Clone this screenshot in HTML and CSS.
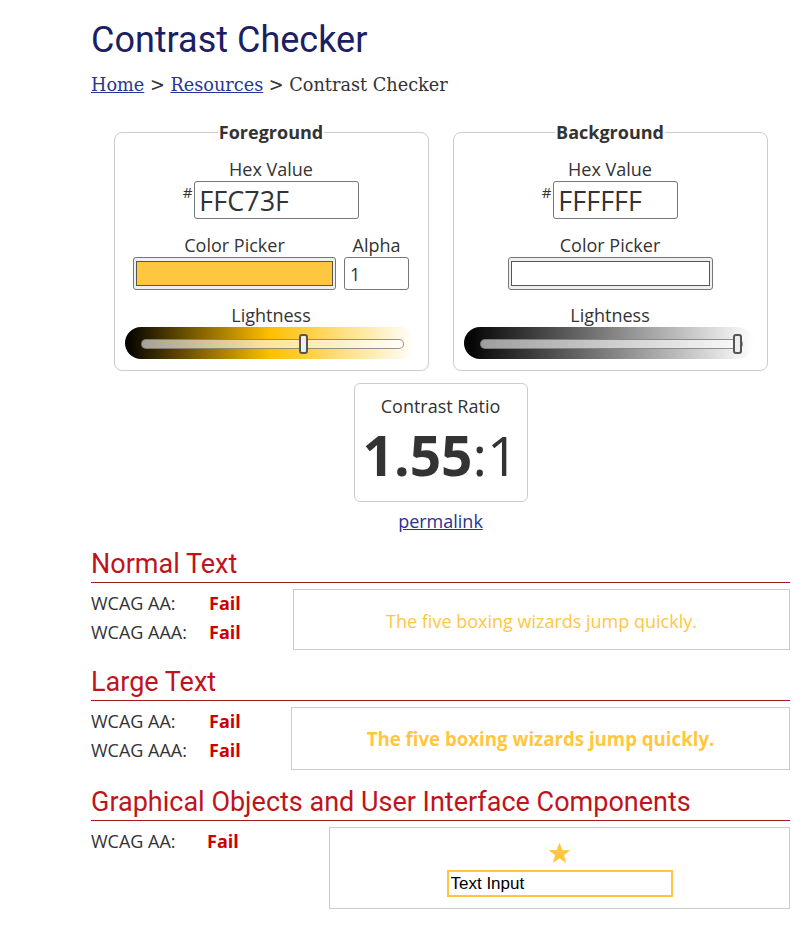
FILE: index.html
```html
<!DOCTYPE html>
<html lang="en">
<head>
<meta charset="utf-8">
<title>Contrast Checker</title>
<link rel="stylesheet" href="styles.css">
</head>
<body>
<main class="page">
  <h1 class="title">Contrast Checker</h1>
  <nav class="crumbs"><a href="#">Home</a> &gt; <a href="#">Resources</a> &gt; Contrast Checker</nav>

  <div class="pickers">
    <fieldset class="panel">
      <legend>Foreground</legend>
      <div class="panel-body">
        <div class="lbl">Hex Value</div>
        <div class="hexrow"><span class="hash">#</span><input class="hex" type="text" value="FFC73F"></div>
        <div class="pickrow">
          <div class="col">
            <div class="lbl">Color Picker</div>
            <div class="swatch"><span class="swatch-fill swatch-fg"></span></div>
          </div>
          <div class="col">
            <div class="lbl">Alpha</div>
            <input class="alpha" type="text" value="1">
          </div>
        </div>
        <div class="lbl lbl-light">Lightness</div>
        <div class="slider slider-fg">
          <div class="track"><span class="thumb" style="left:calc(62.4% - 5.6px)"></span></div>
        </div>
      </div>
    </fieldset>

    <fieldset class="panel">
      <legend>Background</legend>
      <div class="panel-body">
        <div class="lbl">Hex Value</div>
        <div class="hexrow"><span class="hash">#</span><input class="hex hex-short" type="text" value="FFFFFF"></div>
        <div class="pickrow">
          <div class="col">
            <div class="lbl">Color Picker</div>
            <div class="swatch swatch-wide"><span class="swatch-fill swatch-bg"></span></div>
          </div>
        </div>
        <div class="lbl lbl-light">Lightness</div>
        <div class="slider slider-bg">
          <div class="track"><span class="thumb" style="left:calc(100% - 9px)"></span></div>
        </div>
      </div>
    </fieldset>
  </div>

  <div class="ratio-box">
    <div class="lbl">Contrast Ratio</div>
    <div class="ratio"><b>1.55</b>:1</div>
  </div>
  <div class="perma"><a href="#">permalink</a></div>

  <h2 class="sec-title sec-first">Normal Text</h2>
  <div class="result result-normal">
    <span class="k">WCAG AA:</span><span class="fail">Fail</span>
    <div class="sample sample-normal">The five boxing wizards jump quickly.</div>
    <span class="k">WCAG AAA:</span><span class="fail">Fail</span>
  </div>

  <h2 class="sec-title">Large Text</h2>
  <div class="result result-large">
    <span class="k">WCAG AA:</span><span class="fail">Fail</span>
    <div class="sample sample-large">The five boxing wizards jump quickly.</div>
    <span class="k">WCAG AAA:</span><span class="fail">Fail</span>
  </div>

  <h2 class="sec-title">Graphical Objects and User Interface Components</h2>
  <div class="result result-ui">
    <span class="k">WCAG AA:</span><span class="fail">Fail</span>
    <div class="sample sample-ui">
      <svg class="star" width="23" height="22" viewBox="0 0 24 23" aria-hidden="true"><polygon points="12,0.5 14.9,8.3 23.3,8.6 16.7,13.8 19,21.9 12,17.2 5,21.9 7.3,13.8 0.7,8.6 9.1,8.3" fill="#FFC73F"/></svg>
      <input class="ui-input" type="text" value="Text Input">
    </div>
  </div>
</main>
</body>
</html>
```

FILE: styles.css
```css
* { box-sizing: border-box; }

body {
  margin: 0;
  background: #fff;
  color: #333;
  font-family: "Open Sans", "DejaVu Sans", sans-serif;
  font-size: 18px;
}

.page {
  padding: 19px 18px 0 91px;
}

.title {
  margin: 0;
  font: 400 36px/42px Roboto, "Liberation Sans", sans-serif;
  color: #1a2061;
}

.crumbs {
  margin-top: 12px;
  font: 400 17.7px/24px "DejaVu Serif", "Liberation Serif", serif;
  color: #333;
}
.crumbs a { color: #283593; }

.pickers {
  margin-top: 23px;
  display: flex;
  justify-content: center;
  gap: 24px;
}

.panel {
  margin: 0;
  width: 315px;
  min-width: 0;
  padding: 13px 10px 11px;
  border: 1px solid #ccc;
  border-radius: 8px;
}
.panel legend {
  margin: 0 auto;
  padding: 0 1px;
  font-weight: 700;
  font-size: 18px;
  line-height: 24px;
  color: #333;
}

.panel-body {
  display: flex;
  flex-direction: column;
  align-items: center;
}

.lbl {
  font-size: 18px;
  line-height: 24px;
  text-align: center;
  color: #333;
}
.lbl-light { margin-top: 13px; }

.hexrow {
  display: flex;
  align-items: flex-start;
  margin-bottom: 14px;
}
.hash {
  font-size: 15px;
  line-height: 15px;
  margin-top: 4px;
  margin-right: 2px;
}
.hex {
  width: 165px;
  height: 38px;
  border: 1px solid #767676;
  border-radius: 3px;
  padding: 0 4px;
  font: 400 27px "Open Sans", sans-serif;
  color: #333;
  background: #fff;
}
.hex-short { width: 125px; }

.pickrow {
  display: flex;
  gap: 8px;
  justify-content: center;
}
.col {
  display: flex;
  flex-direction: column;
  align-items: center;
}

.swatch {
  width: 203px;
  height: 33px;
  padding: 3px 2px;
  border: 1px solid #767676;
  border-radius: 3px;
  background: #efefef;
}
.swatch-wide { width: 205px; }
.swatch-fill {
  display: block;
  height: 100%;
  border: 1px solid #555;
}
.swatch-fg { background: #FFC73F; }
.swatch-bg { background: #fff; }

.alpha {
  width: 65px;
  height: 33px;
  border: 1px solid #767676;
  border-radius: 3px;
  padding: 0 5px;
  font: 400 18px "Open Sans", sans-serif;
  color: #333;
  background: #fff;
}

.slider {
  width: 290px;
  height: 32px;
  border-radius: 16px;
  padding: 12px 11px 0 16px;
  margin-left: -2px;
}
.slider-fg { background: linear-gradient(to right, #000 0%, #ffbf00 50%, #fff 100%); }
.slider-bg { background: linear-gradient(to right, #000 0%, #808080 50%, #fff 100%); }

.track {
  position: relative;
  height: 10px;
  border-radius: 5px;
  border: 1px solid rgba(110, 110, 110, 0.75);
  background: rgba(255, 255, 255, 0.6);
}
.thumb {
  position: absolute;
  top: -6px;
  width: 9px;
  height: 20px;
  border: 2px solid #555;
  border-radius: 3px;
  background: #eee;
}

.ratio-box {
  width: 174px;
  margin: 12px auto 0;
  padding: 10px 0 16px;
  border: 1px solid #ccc;
  border-radius: 6px;
  text-align: center;
}
.ratio {
  margin-top: 7px;
  font-size: 55px;
  line-height: 60px;
  font-weight: 400;
  color: #333;
}
.ratio b { font-weight: 700; }

.perma {
  margin-top: 7px;
  text-align: center;
  line-height: 24px;
}
.perma a { color: #2b3190; }

.sec-title {
  margin: 17px 0 0;
  padding-bottom: 2px;
  border-bottom: 1px solid #a0191e;
  font: 400 27px/31px Roboto, "Liberation Sans", sans-serif;
  color: #c0141c;
}
.sec-title.sec-first { margin-top: 16px; }

.result {
  display: grid;
  grid-template-columns: 118px 84px 1fr;
  grid-template-rows: 29px 32px;
  margin-top: 6px;
  line-height: 28px;
}
.result-large {
  grid-template-columns: 118px 82px 1fr;
  grid-template-rows: 29px 34px;
}
.result-ui {
  grid-template-columns: 116px 122px 1fr;
  grid-template-rows: 82px;
}

.k { color: #333; }
.fail { font-weight: 700; color: #c00; }

.sample {
  grid-column: 3;
  grid-row: 1 / span 2;
  border: 1px solid #ccc;
  display: flex;
  align-items: center;
  justify-content: center;
  color: #FFC73F;
}
.sample-normal { padding-top: 2px; }
.sample-large { font-weight: 700; font-size: 18.67px; }

.sample-ui {
  grid-row: 1;
  flex-direction: column;
  justify-content: flex-start;
  padding-top: 14px;
}
.star { display: block; }
.ui-input {
  margin-top: 6px;
  width: 226px;
  height: 27px;
  border: 2px solid #FFC73F;
  padding: 0 2px;
  font: 400 17px "Liberation Sans", Arial, sans-serif;
  color: #000;
  background: #fff;
}
```
